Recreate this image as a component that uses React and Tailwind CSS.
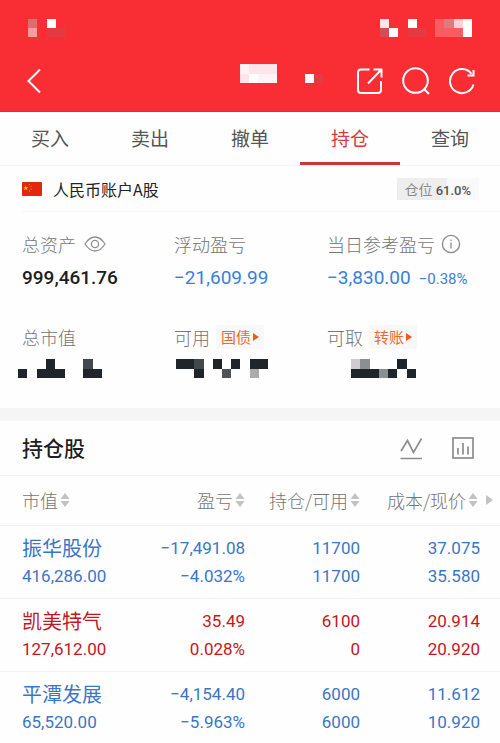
import React from 'react';
import clsx from 'clsx';

const COLORS = {
  w: '#ffffff', p: '#ffe4ea', q: '#fff3f5', a: '#de6c70', b: '#f89ca2', e: '#e53a41', f: '#d04f57',
  g: '#fb5c62', h: '#d97d7d', i: '#ffd0d5', k: '#20242b', l: '#41494c', m: '#505254', n: '#ababad',
  o: '#cfcbd0', r: '#8b8e93',
};

// Masked text: each character is one block, a dot is empty
const Mosaic = ({ rows, className }) => (
  <svg className={clsx('block shrink-0', className)} viewBox={`0 0 ${rows[0].length} ${rows.length}`} preserveAspectRatio="none" shapeRendering="crispEdges" aria-hidden="true">
    {rows.map((row, y) =>
      row.split('').map((c, x) => c !== '.' && <rect key={`${x}-${y}`} x={x} y={y} width="1" height="1" fill={COLORS[c]} />)
    )}
  </svg>
);

const HeaderIcon = ({ label, width = 28, children }) => (
  <button type="button" aria-label={label}>
    <svg className="block" width={width} height="28" viewBox={`0 0 ${width} 28`} fill="none" stroke="#fff" strokeWidth="2">{children}</svg>
  </button>
);

const Header = () => (
  <header className="bg-[#f92e34] border-b border-[#d2343b] pt-[19px] pb-[9px]">
    <div className="flex justify-between pl-7 pr-7">
      <Mosaic className="w-[37px] h-[18px]" rows={['a.w.', 'b.ee']} />
      <Mosaic className="w-[92px] h-[18px]" rows={['p..w..ghiw', 'fw.ee.gggw']} />
    </div>
    <div className="mt-[23px] flex h-[42px] items-center pl-[26px] pr-6">
      <HeaderIcon label="返回" width={16}><path d="M14 2.5 2.5 14 14 25.5" /></HeaderIcon>
      <Mosaic className="mt-1 mr-[33px] ml-auto h-[19px] w-[83px] self-start" rows={['qppp.....', 'pwqq...we']} />
      <div className="flex gap-[18px]">
        <HeaderIcon label="分享">
          <path d="M13.5 2.5H5Q2 2.5 2 5.5V23Q2 26 5 26H22Q25 26 25 23V14" />
          <path d="M17.5 2.5H25.5V10.5M25 3 12 16.5" />
        </HeaderIcon>
        <HeaderIcon label="搜索">
          <circle cx="13.5" cy="13.5" r="12.3" />
          <path d="m22 22 5 5" />
        </HeaderIcon>
        <HeaderIcon label="刷新">
          <path d="M25.5 17.5A12 12 0 1 1 23.5 6.8" />
          <path d="M25.5 3V8.5H19.5" />
        </HeaderIcon>
      </div>
    </div>
  </header>
);

const TABS = ['买入', '卖出', '撤单', '持仓', '查询'];

const Tabs = () => (
  <nav className="grid grid-cols-5 border-b border-[#f4f4f4]">
    {TABS.map((tab) => (
      <a
        key={tab}
        href="#"
        aria-current={tab === '持仓' ? 'page' : undefined}
        className={clsx(
          'block h-[53px] border-b-[3px] text-center text-[19px] leading-[51px]',
          tab === '持仓' ? 'border-[#c9363b] text-[#d93a3c]' : 'border-transparent text-[#555]'
        )}
      >
        {tab}
      </a>
    ))}
  </nav>
);

const Flag = () => (
  <svg className="mr-[11px]" width="20" height="14" viewBox="0 0 20 14" aria-hidden="true">
    <rect width="20" height="14" rx="1" fill="#e5260f" />
    <path d="m3.8 3.5.7 1.7 1.8.1-1.4 1.2.5 1.8-1.6-1-1.6 1 .5-1.8L1.3 5.3l1.8-.1z" fill="#fbbf1a" />
    <g fill="#f0821c">
      <circle cx="7.5" cy="2.8" r=".7" />
      <circle cx="9" cy="4.6" r=".7" />
      <circle cx="9" cy="7" r=".7" />
      <circle cx="7.5" cy="9" r=".7" />
    </g>
  </svg>
);

const AccountRow = ({ position }) => (
  <div className="ml-[22px] flex h-[46px] items-center border-b border-[#f6f6f6] pr-[21px]">
    <Flag />
    <span className="text-[16px] text-[#222]">人民币账户A股</span>
    <div className="relative ml-auto h-[22px] bg-[#f9f9f9] px-2 text-[14px] leading-[22px] whitespace-nowrap">
      <div className="absolute inset-y-0 left-0 bg-[#eeeeee]" style={{ width: `${position}%` }}></div>
      <span className="relative text-[#8a8a8a]">仓位</span>{' '}
      <span className="relative font-[Roboto] text-[13px] font-medium text-[#555]">{position.toFixed(1)}%</span>
    </div>
  </div>
);

const Tag = ({ children }) => (
  <button type="button" className="ml-1.5 flex h-6 items-center gap-[2px] bg-[#f8f8f8] px-[5px] text-[15px] leading-6 font-normal text-[#ee6a2c]">
    {children}
    <svg width="6" height="8" viewBox="0 0 6 8" aria-hidden="true"><path d="M0 0 6 4 0 8z" fill="#ee5a1c" /></svg>
  </button>
);

const Label = ({ children }) => <div className="flex h-6 items-center text-[18px] leading-6 font-light text-[#757575]">{children}</div>;

const Summary = () => (
  <section className="grid grid-cols-[152fr_153fr_173fr] gap-y-8 pt-5 pb-[30px] pl-[22px] whitespace-nowrap">
    <div>
      <Label>
        总资产
        <button type="button" aria-label="隐藏资产" className="ml-2">
          <svg width="22" height="16" viewBox="0 0 22 16" fill="none" stroke="#909090" strokeWidth="1.3">
            <path d="M1 8Q5.5 1 11 1T21 8Q16.5 15 11 15T1 8Z" />
            <circle cx="11" cy="8" r="3.6" />
          </svg>
        </button>
      </Label>
      <div className="mt-2 font-[Roboto] text-[19px] leading-7 font-medium text-[#1d1d1f]">999,461.76</div>
    </div>
    <div>
      <Label>浮动盈亏</Label>
      <div className="mt-2 font-[Roboto] text-[19px] leading-7 text-[#3a7edb]">−21,609.99</div>
    </div>
    <div>
      <Label>
        当日参考盈亏
        <button type="button" aria-label="说明" className="ml-1.5">
          <svg width="20" height="20" viewBox="0 0 20 20" fill="none" stroke="#8a8a8a" strokeWidth="1.3">
            <circle cx="10" cy="10" r="8.6" />
            <path d="M10 8.5V14.5M10 5.5V7" />
          </svg>
        </button>
      </Label>
      <div className="mt-2 font-[Roboto] text-[19px] leading-7 text-[#3a7edb]">
        −3,830.00<span className="ml-2 text-[15px]">−0.38%</span>
      </div>
    </div>
    <div>
      <Label>总市值</Label>
      <Mosaic className="mt-2.5 -ml-1 h-[19px] w-[84px]" rows={['...k...l.', 'k.kkk..kk']} />
    </div>
    <div>
      <Label>可用<Tag>国债</Tag></Label>
      <Mosaic className="mt-2.5 ml-0.5 h-[19px] w-[92px]" rows={['kkl.k.k.kk', '..k..m..n.']} />
    </div>
    <div>
      <Label>可取<Tag>转账</Tag></Label>
      <Mosaic className="mt-2.5 ml-6 h-[19px] w-[65px]" rows={['or...k.', 'kkkrk.k']} />
    </div>
  </section>
);

const SortIcon = () => (
  <svg width="10" height="16" viewBox="0 0 10 16" fill="#c2c2c2" aria-hidden="true"><path d="M5 1 9.5 7H.5zM5 15 .5 9h9z" /></svg>
);

const HOLDINGS = [
  { name: '振华股份', value: '416,286.00', profit: '−17,491.08', rate: '−4.032%', held: '11700', usable: '11700', cost: '37.075', price: '35.580' },
  { name: '凯美特气', value: '127,612.00', profit: '35.49', rate: '0.028%', held: '6100', usable: '0', cost: '20.914', price: '20.920', up: true },
  { name: '平潭发展', value: '65,520.00', profit: '−4,154.40', rate: '−5.963%', held: '6000', usable: '6000', cost: '11.612', price: '10.920' },
];

const Holdings = () => (
  <section>
    <div className="flex h-[55px] items-center border-b border-[#f3f3f3] pr-[25px] pl-[22px]">
      <h2 className="mr-auto text-[21px] font-medium text-[#1f1f24]">持仓股</h2>
      <button type="button" aria-label="走势" className="mr-[28px]">
        <svg className="block" width="24" height="24" viewBox="0 0 24 24" fill="none" stroke="#8c8c8c" strokeWidth="1.7">
          <path d="M2 15 8.5 4.500 14.5 16.500 22.5 2.500M1.500 22.5H23" />
        </svg>
      </button>
      <button type="button" aria-label="图表">
        <svg className="block" width="24" height="24" viewBox="0 0 24 24" fill="none" stroke="#8c8c8c" strokeWidth="1.7">
          <rect x="2" y="2" width="20" height="20" />
          <path d="M7 12V18.5M12 7V18.5M17 10.5V18.5" />
        </svg>
      </button>
    </div>
    <table className="w-full table-fixed whitespace-nowrap">
      <thead>
        <tr className="h-[49px] border-b border-[#f3f3f3] text-[18px] text-[#757575]">
          <th className="w-[25%] pl-[22px] font-light"><span className="flex items-center gap-[2px]">市值<SortIcon /></span></th>
          <th className="w-[24%] font-light"><span className="flex items-center justify-end gap-[2px]">盈亏<SortIcon /></span></th>
          <th className="w-[23%] font-light"><span className="flex items-center justify-end gap-[2px]">持仓/可用<SortIcon /></span></th>
          <th className="w-[28%] pr-[7px] font-light">
            <span className="flex items-center justify-end gap-[2px]">
              成本/现价<SortIcon />
              <svg className="ml-1.5" width="7" height="10" viewBox="0 0 7 10" fill="#c2c2c2" aria-hidden="true"><path d="M0 0 7 5 0 10z" /></svg>
            </span>
          </th>
        </tr>
      </thead>
      <tbody>
        {HOLDINGS.map((h) => (
          <tr
            key={h.name}
            className={clsx('h-[73px] border-b border-[#f1f1f1] text-right font-[Roboto] text-[17px] leading-7', h.up ? 'text-[#c4161e]' : 'text-[#3a76c6]')}
          >
            <td className="pl-[22px] text-left">
              <div className="h-7 font-['Noto_Sans_CJK_SC',sans-serif] text-[20px]">{h.name}</div>
              <div>{h.value}</div>
            </td>
            <td><div>{h.profit}</div><div>{h.rate}</div></td>
            <td><div>{h.held}</div><div>{h.usable}</div></td>
            <td className="pr-5"><div>{h.cost}</div><div>{h.price}</div></td>
          </tr>
        ))}
      </tbody>
    </table>
  </section>
);

export default function App() {
  return (
    <div className="overflow-hidden bg-[#fefefe] font-['Noto_Sans_CJK_SC',sans-serif]">
      <Header />
      <Tabs />
      <AccountRow position={61} />
      <Summary />
      <div className="h-[13px] bg-[#f5f5f5]"></div>
      <Holdings />
    </div>
  );
}
